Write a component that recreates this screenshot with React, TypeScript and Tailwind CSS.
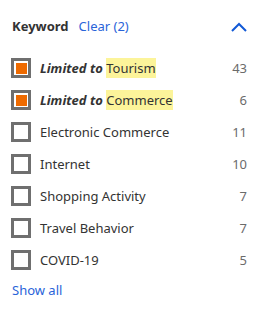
import { useState } from "react";

type Kw = { label: string; count: number; limited?: boolean };

const keywords: Kw[] = [
  { label: "Tourism", count: 43, limited: true },
  { label: "Commerce", count: 6, limited: true },
  { label: "Electronic Commerce", count: 11 },
  { label: "Internet", count: 10 },
  { label: "Shopping Activity", count: 7 },
  { label: "Travel Behavior", count: 7 },
  { label: "COVID-19", count: 5 },
];

export default function App() {
  const [open] = useState(true);
  return (
    <div
      className="w-[259px] h-[309px] bg-white text-[#333] px-[11px]"
      style={{ fontFamily: '"Noto Sans", sans-serif' }}
    >
      <div className="flex items-center h-[52px] pt-[1px]">
        <span className="text-[13px] font-bold ml-[1px]">Keyword</span>
        <button className="ml-[10px] text-[13px] text-[#2a64d9]">Clear (2)</button>
        <svg className="ml-auto mr-[1px]" width="16" height="10" viewBox="0 0 16 10" fill="none">
          <path d="M1 9 L8 2 L15 9" stroke="#1259d6" strokeWidth="2" />
        </svg>
      </div>
      {open && (
        <ul className="flex flex-col">
          {keywords.map((k) => (
            <li key={k.label} className="flex items-center h-[32px]">
              <span className="w-[20px] h-[20px] border-[3px] border-[#6f6f6f] flex items-center justify-center shrink-0">
                {k.limited && <span className="w-[11px] h-[11px] bg-[#ee6a00]" />}
              </span>
              <span className="ml-[9px] text-[13px] leading-[19px] pt-[1px]">
                {k.limited && <em className="font-bold">Limited to </em>}
                {k.limited ? <span className="bg-[#fcf49a] py-[1px]">{k.label}</span> : k.label}
              </span>
              <span className="ml-auto mr-[1px] text-[13px] text-[#6b6b6b] pt-[1px]">{k.count}</span>
            </li>
          ))}
        </ul>
      )}
      <button className="mt-[5px] ml-[1px] text-[13px] text-[#2a64d9]">Show all</button>
    </div>
  );
}
